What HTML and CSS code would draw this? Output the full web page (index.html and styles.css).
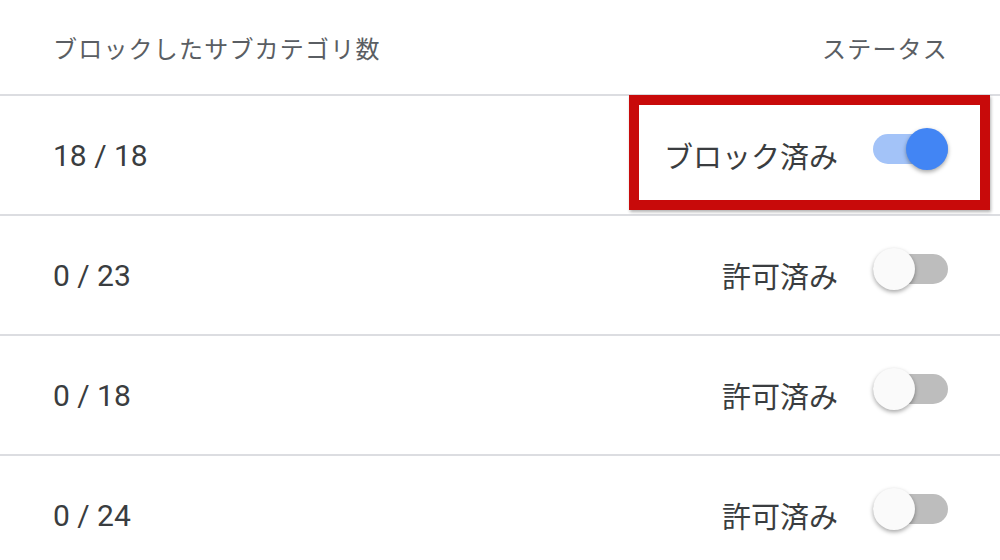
FILE: index.html
```html
<!DOCTYPE html>
<html lang="ja">
<head>
    <meta charset="UTF-8">
    <meta name="viewport" content="width=device-width, initial-scale=1.0">
    <title>サブカテゴリ</title>
    <link rel="stylesheet" href="styles.css">
</head>
<body>
    <div class="table">
        <div class="row head">
            <span class="count">ブロックしたサブカテゴリ数</span>
            <span class="status">ステータス</span>
        </div>

        <div class="row">
            <span class="count">18 / 18</span>
            <span class="status">
                ブロック済み
                <span class="switch on"><span class="track"></span><span class="thumb"></span></span>
            </span>
            <div class="highlight"></div>
        </div>

        <div class="row">
            <span class="count">0 / 23</span>
            <span class="status">
                許可済み
                <span class="switch"><span class="track"></span><span class="thumb"></span></span>
            </span>
        </div>

        <div class="row">
            <span class="count">0 / 18</span>
            <span class="status">
                許可済み
                <span class="switch"><span class="track"></span><span class="thumb"></span></span>
            </span>
        </div>

        <div class="row">
            <span class="count">0 / 24</span>
            <span class="status">
                許可済み
                <span class="switch"><span class="track"></span><span class="thumb"></span></span>
            </span>
        </div>
    </div>
</body>
</html>
```

FILE: styles.css
```css
body {
    font-family: Roboto, "Noto Sans CJK JP", sans-serif;
    margin: 0;
    background: #fff;
    color: #3a3d40;
}

.row {
    position: relative;
    display: flex;
    justify-content: space-between;
    align-items: center;
    height: 118px;
    padding: 0 52px 0 53px;
    border-bottom: 2px solid #dcdde1;
}

.row.head {
    height: 94px;
    color: #5a5e63;
}

.count {
    font-size: 30px;
}

.head .count,
.head .status {
    font-size: 24px;
    letter-spacing: 1.2px;
}

.status {
    display: flex;
    align-items: center;
    gap: 35px;
    font-size: 29px;
}

.switch {
    position: relative;
    display: inline-block;
    width: 75px;
    height: 42px;
    margin-bottom: 12px;
}

.track {
    position: absolute;
    left: 0;
    top: 6px;
    width: 75px;
    height: 30px;
    border-radius: 15px;
    background-color: #bdbdbd;
}

.thumb {
    position: absolute;
    left: 0;
    top: 0;
    width: 42px;
    height: 42px;
    border-radius: 50%;
    background-color: #fafafa;
    box-shadow: 0 2px 4px rgba(0, 0, 0, 0.35);
}

.switch.on .track {
    background-color: #a3c3f8;
}

.switch.on .thumb {
    left: 33px;
    background-color: #4285f4;
}

.highlight {
    position: absolute;
    top: -1px;
    right: 10px;
    width: 361px;
    height: 115px;
    box-sizing: border-box;
    border: 10px solid #c80a0a;
    box-shadow: 1px 2px 3px rgba(0, 0, 0, 0.3);
}
```
